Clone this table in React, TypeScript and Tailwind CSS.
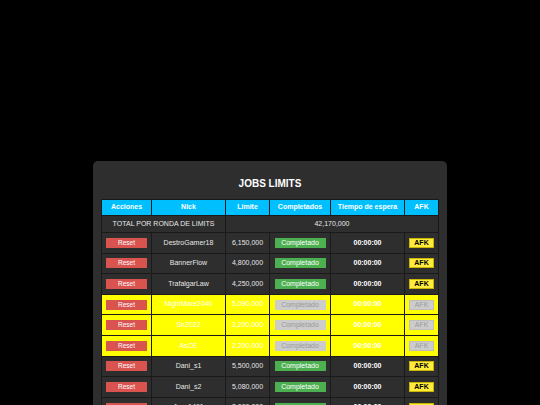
import React from 'react';

type JobRow = {
  nick: string;
  limit: string;
  afkBlocked: boolean;
};

const rows: JobRow[] = [
  { nick: 'DestroGamer18', limit: '6,150,000', afkBlocked: false },
  { nick: 'BannerFlow', limit: '4,800,000', afkBlocked: false },
  { nick: 'TrafalgarLaw', limit: '4,250,000', afkBlocked: false },
  { nick: 'NightMare2040', limit: '5,090,000', afkBlocked: true },
  { nick: 'Sn2022', limit: '3,200,000', afkBlocked: true },
  { nick: 'AsCE', limit: '2,200,000', afkBlocked: true },
  { nick: 'Dani_s1', limit: '5,500,000', afkBlocked: false },
  { nick: 'Dani_s2', limit: '5,080,000', afkBlocked: false },
  { nick: 'Jaco1491', limit: '3,000,000', afkBlocked: false },
  { nick: 'Reyes_88', limit: '2,900,000', afkBlocked: false },
];

const headers = ['Acciones', 'Nick', 'Limite', 'Completados', 'Tiempo de espera', 'AFK'];

const App: React.FC = () => {
  return (
    <div className="min-h-screen bg-black pt-[161px] font-['Liberation_Sans',Arial,sans-serif]">
      <div className="mx-auto w-[354px] rounded-[5px] bg-[#2e2e2e] px-[8px] pt-[15px] pb-[10px]">
        <h2 className="mb-[7px] text-center text-[10px] font-bold leading-[16px] text-white">JOBS LIMITS</h2>

        <table className="w-[337px] table-fixed border-collapse text-center text-[7px] text-[#e6e6e6]">
          <colgroup>
            <col className="w-[50px]" />
            <col className="w-[74px]" />
            <col className="w-[44px]" />
            <col className="w-[61px]" />
            <col className="w-[74px]" />
            <col className="w-[34px]" />
          </colgroup>
          <thead>
            <tr className="bg-[#00bfff]">
              {headers.map((h) => (
                <th key={h} className="h-[16px] border border-[#1a1a1a] p-0 font-bold text-white">
                  {h}
                </th>
              ))}
            </tr>
          </thead>
          <tbody>
            {/* Total */}
            <tr>
              <td colSpan={2} className="h-[17px] border border-[#1a1a1a] p-0">
                TOTAL POR RONDA DE LIMITS
              </td>
              <td colSpan={4} className="h-[17px] border border-[#1a1a1a] p-0">
                42,170,000
              </td>
            </tr>

            {rows.map((row) => (
              <tr key={row.nick} className={row.afkBlocked ? 'bg-[#ffff00]' : ''}>
                <td className="h-[20.6px] border border-[#1a1a1a] p-0">
                  <button className="mx-auto block h-[10px] w-[41px] bg-[#d9534f] text-[6.5px] leading-[10px] text-white">
                    Reset
                  </button>
                </td>
                <td className={`h-[20.6px] border border-[#1a1a1a] p-0 ${row.afkBlocked ? 'text-white' : ''}`}>
                  {row.nick}
                </td>
                <td className={`h-[20.6px] border border-[#1a1a1a] p-0 ${row.afkBlocked ? 'text-white' : ''}`}>
                  {row.limit}
                </td>
                <td className="h-[20.6px] border border-[#1a1a1a] p-0">
                  <button
                    className={`mx-auto block h-[10px] w-[51px] text-[7px] leading-[10px] ${
                      row.afkBlocked ? 'bg-[#cccccc] text-[#9a9a9a]' : 'bg-[#4caf50] text-white'
                    }`}
                  >
                    Completado
                  </button>
                </td>
                <td className="h-[20.6px] border border-[#1a1a1a] p-0 font-bold text-white">00:00:00</td>
                <td className="h-[20.6px] border border-[#1a1a1a] p-0">
                  <button
                    className={`mx-auto block h-[10px] w-[25px] border text-[7px] leading-[8px] ${
                      row.afkBlocked
                        ? 'border-[#bdbdbd] bg-[#cccccc] text-[#9a9a9a]'
                        : 'border-[#c9b400] bg-[#ffeb3b] font-bold text-black'
                    }`}
                  >
                    AFK
                  </button>
                </td>
              </tr>
            ))}
          </tbody>
        </table>
      </div>
    </div>
  );
};

export default App;
